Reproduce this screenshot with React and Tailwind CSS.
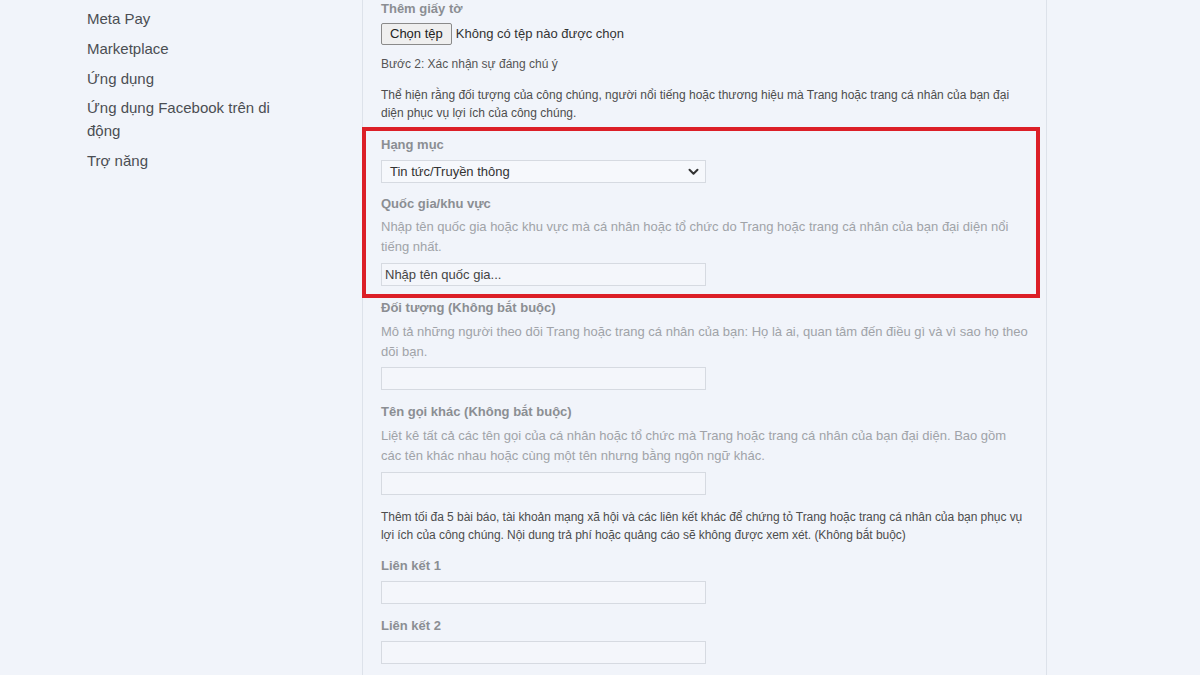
import React from "react";

const font = { fontFamily: '"Liberation Sans", Arial, sans-serif' };

function Label({ children, className = "" }) {
  return (
    <div className={"text-[13px] leading-[16px] font-bold text-[#8b8e93] " + className}>
      {children}
    </div>
  );
}

function Desc({ lines, className = "" }) {
  return (
    <div className={"text-[13px] leading-[20px] text-[#a0a3a8] " + className}>
      {lines.map((l, i) => (
        <div key={i} className="whitespace-nowrap">{l}</div>
      ))}
    </div>
  );
}

function TextBox({ placeholder = "", className = "" }) {
  return (
    <div
      className={
        "w-[325px] h-[23px] border border-[#d6dae1] bg-[#f4f6fb] flex items-center pl-[3px] text-[13px] text-[#444] " +
        className
      }
    >
      {placeholder}
    </div>
  );
}

export default function App() {
  const side = ["Meta Pay", "Marketplace", "Ứng dụng", ["Ứng dụng Facebook trên di", "động"], "Trợ năng"];
  return (
    <div className="w-[1200px] h-[675px] overflow-hidden bg-[#f1f4fa] flex" style={font}>
      {/* Sidebar */}
      <div className="w-[362px] shrink-0 pl-[87px] pt-[7px] flex flex-col gap-[7px] text-[15px] leading-[23px] text-[#4b4e53]">
        {side.map((s, i) =>
          Array.isArray(s) ? (
            <div key={i} className="-mt-[1px]">
              {s.map((l, j) => (
                <div key={j} className="whitespace-nowrap">{l}</div>
              ))}
            </div>
          ) : (
            <div key={i} className="whitespace-nowrap">{s}</div>
          )
        )}
      </div>

      {/* Main panel */}
      <div className="w-[685px] shrink-0 border-x border-[#dde2ea] pl-[18px] pr-[18px] pt-[1px] flex flex-col">
        <Label>Thêm giấy tờ</Label>
        <div className="mt-[6px] flex items-center h-[22px]">
          <div className="h-[22px] px-[8px] flex items-center bg-[#efefef] border border-[#8a8a8a] rounded-[2px] text-[13px] text-[#222]">
            Chọn tệp
          </div>
          <div className="ml-[4px] text-[13px] text-[#333]">Không có tệp nào được chọn</div>
        </div>
        <div className="mt-[11px] text-[12px] leading-[16px] text-[#555]">Bước 2: Xác nhận sự đáng chú ý</div>
        <div className="mt-[14px] text-[12px] leading-[18px] text-[#4d4d4d]">
          <div className="whitespace-nowrap">
            Thể hiện rằng đối tượng của công chúng, người nổi tiếng hoặc thương hiệu mà Trang hoặc trang cá nhân của bạn đại
          </div>
          <div className="whitespace-nowrap">diện phục vụ lợi ích của công chúng.</div>
        </div>

        {/* Highlighted box */}
        <div className="mt-[5px] ml-[-19px] mr-[-12px] border-4 border-[#dc1f27] pl-[15px] pt-[6px] pb-[8px]">
          <Label>Hạng mục</Label>
          <div className="mt-[7px] w-[325px] h-[23px] border border-[#d6dae1] bg-[#f6f8fc] flex items-center justify-between pl-[8px] pr-[6px] text-[13px] text-[#333]">
            <span>Tin tức/Truyền thông</span>
            <svg width="11" height="8" viewBox="0 0 11 8" fill="none">
              <path d="M1.5 1.8 L5.5 5.8 L9.5 1.8" stroke="#333" strokeWidth="2" strokeLinecap="round" strokeLinejoin="round" />
            </svg>
          </div>
          <Label className="mt-[13px]">Quốc gia/khu vực</Label>
          <Desc
            className="mt-[5px]"
            lines={[
              "Nhập tên quốc gia hoặc khu vực mà cá nhân hoặc tổ chức do Trang hoặc trang cá nhân của bạn đại diện nổi",
              "tiếng nhất.",
            ]}
          />
          <TextBox className="mt-[6px]" placeholder="Nhập tên quốc gia..." />
        </div>

        <Label className="mt-[2px]">Đối tượng (Không bắt buộc)</Label>
        <Desc
          className="mt-[6px]"
          lines={[
            "Mô tả những người theo dõi Trang hoặc trang cá nhân của bạn: Họ là ai, quan tâm đến điều gì và vì sao họ theo",
            "dõi bạn.",
          ]}
        />
        <TextBox className="mt-[5px]" />

        <Label className="mt-[14px]">Tên gọi khác (Không bắt buộc)</Label>
        <Desc
          className="mt-[6px]"
          lines={[
            "Liệt kê tất cả các tên gọi của cá nhân hoặc tổ chức mà Trang hoặc trang cá nhân của bạn đại diện. Bao gồm",
            "các tên khác nhau hoặc cùng một tên nhưng bằng ngôn ngữ khác.",
          ]}
        />
        <TextBox className="mt-[6px]" />

        <div className="mt-[13px] text-[12px] leading-[18px] text-[#4d4d4d] tracking-[-0.05px]">
          <div className="whitespace-nowrap">
            Thêm tối đa 5 bài báo, tài khoản mạng xã hội và các liên kết khác để chứng tỏ Trang hoặc trang cá nhân của bạn phục vụ
          </div>
          <div className="whitespace-nowrap">
            lợi ích của công chúng. Nội dung trả phí hoặc quảng cáo sẽ không được xem xét. (Không bắt buộc)
          </div>
        </div>

        <Label className="mt-[14px]">Liên kết 1</Label>
        <TextBox className="mt-[7px]" />
        <Label className="mt-[14px]">Liên kết 2</Label>
        <TextBox className="mt-[7px]" />
      </div>

      <div className="flex-1" />
    </div>
  );
}
